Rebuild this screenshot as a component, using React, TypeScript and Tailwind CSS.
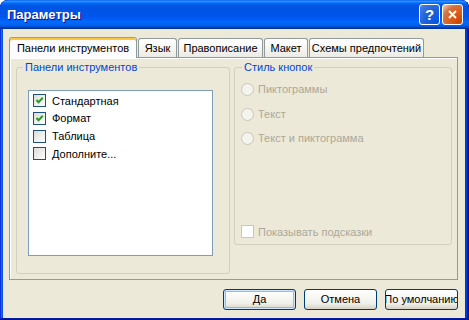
import React from "react";

// Окно «Параметры» в стиле Windows XP (Luna).

const tabs = [
  { label: "Панели инструментов", w: "w-[128px]", active: true },
  { label: "Язык", w: "w-[39px]" },
  { label: "Правописание", w: "w-[85px]" },
  { label: "Макет", w: "w-[44px]" },
  { label: "Схемы предпочтений", w: "w-[115px]" },
];

const toolbars = [
  { label: "Стандартная", on: true },
  { label: "Формат", on: true },
  { label: "Таблица", on: false },
  { label: "Дополните...", on: false },
];

function CheckBox({ on, disabled }: { on?: boolean; disabled?: boolean }) {
  return (
    <span
      className={
        disabled
          ? "w-[13px] h-[13px] shrink-0 border border-[#CAC8BB] bg-white"
          : "w-[13px] h-[13px] shrink-0 border border-[#1C5180] bg-[linear-gradient(135deg,#DCDCD7,#FFFFFF)] flex items-center justify-center"
      }
    >
      {on && (
        <svg viewBox="0 0 11 11" className="w-[11px] h-[11px]">
          <path d="M2.5 5 L4.5 7.2 L8.8 2.8" stroke="#21A121" strokeWidth="2" fill="none" />
        </svg>
      )}
    </span>
  );
}

function Radio({ label }: { label: string }) {
  return (
    <div className="flex items-center h-[13px] gap-[4px] text-[#ACA899]">
      <span className="w-[13px] h-[13px] shrink-0 rounded-full border border-[#CAC8BB] bg-[#F4F3EE]" />
      <span>{label}</span>
    </div>
  );
}

function Button({ label, focused }: { label: string; focused?: boolean }) {
  return (
    <div
      className={
        "w-[73px] h-[21px] rounded-[3px] border border-[#003C74] bg-[linear-gradient(to_bottom,#FFFFFF,#F0F0EA_70%,#D6D0C5)] flex items-center justify-center overflow-hidden whitespace-nowrap " +
        (focused ? "shadow-[inset_0_0_0_1px_#CEE7FF,inset_0_0_0_2px_#98B8EA]" : "")
      }
    >
      {label}
    </div>
  );
}

export default function App() {
  return (
    <div className="w-[469px] h-[320px] flex flex-col rounded-t-[8px] overflow-hidden bg-[#0831D9] shadow-[inset_-1px_-1px_#00138C,inset_1px_1px_#0831D9,inset_-2px_-2px_#001EA0,inset_2px_2px_#166AEE,inset_-3px_-3px_#003BDA,inset_3px_3px_#0855DD] font-['Liberation_Sans',Arial,sans-serif] text-[11px] text-black">
      {/* заголовок */}
      <div className="h-[29px] shrink-0 flex items-center pl-[7px] pr-[6px] rounded-t-[8px] bg-[linear-gradient(to_bottom,#0058EE_0%,#3593FF_4%,#288EFF_6%,#127DFF_8%,#036FFC_10%,#0262EE_14%,#0057E5_20%,#0054E3_24%,#0055EB_56%,#005BF5_66%,#026AFE_76%,#0062EF_86%,#0052D6_92%,#0040AB_94%,#003092_100%)]">
        <span className="flex-1 text-white font-bold text-[13px] [text-shadow:1px_1px_0_#0F1089]">Параметры</span>
        <div className="flex gap-[2px]">
          <div className="w-[21px] h-[21px] rounded-[3px] border border-white bg-[radial-gradient(circle_at_90%_90%,#0054E9_0%,#2263D5_55%,#4479E4_90%,#A3BBEC_100%)] flex items-center justify-center text-white font-bold text-[15px] leading-none">
            ?
          </div>
          <div className="w-[21px] h-[21px] rounded-[3px] border border-white bg-[radial-gradient(circle_at_90%_90%,#CC4600_0%,#DC6527_55%,#CD7546_70%,#FFCCB2_100%)] flex items-center justify-center">
            <svg viewBox="0 0 13 13" className="w-[13px] h-[13px]">
              <path d="M3 3 L10 10 M10 3 L3 10" stroke="white" strokeWidth="2" />
            </svg>
          </div>
        </div>
      </div>

      {/* рабочая область */}
      <div className="flex-1 flex flex-col ml-[3px] mr-[4px] mb-[3px] bg-[#ECE9D8] pt-[7px] pl-[6px] pr-[7px] pb-[8px]">
        <div className="h-[21px] flex items-end gap-[1px] relative z-10">
          {tabs.map((t) =>
            t.active ? (
              <div
                key={t.label}
                className={`${t.w} h-[21px] -mb-[1px] rounded-t-[3px] border border-b-0 border-[#919B9C] border-t-[#E68B2C] bg-[#FCFCFE] shadow-[inset_0_2px_#FFC83C] flex items-center justify-center whitespace-nowrap`}
              >
                {t.label}
              </div>
            ) : (
              <div
                key={t.label}
                className={`${t.w} h-[19px] rounded-t-[3px] border border-b-0 border-[#919B9C] bg-[linear-gradient(to_bottom,#FFFFFF,#FAFAF9_30%,#ECEBE5)] flex items-center justify-center whitespace-nowrap`}
              >
                {t.label}
              </div>
            )
          )}
        </div>

        <div className="h-[223px] border border-[#919B9C] shadow-[inset_1px_1px_#FFFFFF] bg-[#ECE9D8] flex items-start gap-[4px] pt-[3px] pl-[6px] pr-[5px] pb-[5px]">
          {/* левая группа */}
          <fieldset className="w-[214px] h-[213px] border border-[#D0D0BF] rounded-[3px] m-0 p-0 pl-[11px]">
            <legend className="-ml-[5px] px-[2px] leading-[13px] text-[#0046D5]">Панели инструментов</legend>
            <div className="mt-[16px] w-[185px] h-[166px] border border-[#7F9DB9] bg-white pt-[1px] pl-[4px] flex flex-col">
              {toolbars.map((t) => (
                <div key={t.label} className="h-[17.67px] flex items-center gap-[6px]">
                  <CheckBox on={t.on} />
                  <span>{t.label}</span>
                </div>
              ))}
            </div>
          </fieldset>

          {/* правая группа */}
          <fieldset className="w-[218px] h-[184px] border border-[#D0D0BF] rounded-[3px] m-0 p-0 pl-[6px] pb-[4px] flex flex-col">
            <legend className="ml-[1px] px-[2px] leading-[13px] text-[#0046D5]">Стиль кнопок</legend>
            <div className="mt-[9px] flex flex-col gap-[11.5px]">
              <Radio label="Пиктограммы" />
              <Radio label="Текст" />
              <Radio label="Текст и пиктограмма" />
            </div>
            <div className="mt-auto flex items-center gap-[4px] text-[#ACA899]">
              <CheckBox disabled />
              <span>Показывать подсказки</span>
            </div>
          </fieldset>
        </div>

        <div className="mt-[9px] flex justify-end gap-[8px]">
          <Button label="Да" focused />
          <Button label="Отмена" />
          <Button label="По умолчанию" />
        </div>
      </div>
    </div>
  );
}
